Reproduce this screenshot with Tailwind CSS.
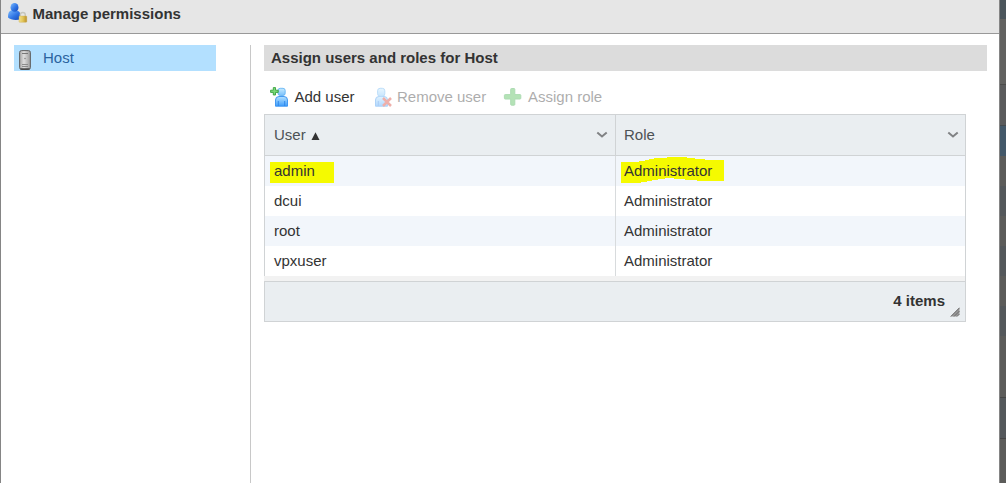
<!DOCTYPE html>
<html lang="en">
<head>
<meta charset="utf-8">
<title>Manage permissions</title>
<script src="https://cdn.jsdelivr.net/npm/@tailwindcss/browser@4"></script>
</head>
<body class="flex h-[483px] w-[1006px] overflow-hidden bg-white font-['Liberation_Sans',Arial,sans-serif] text-[15px] leading-[18px] text-[#333]">
<div class="flex h-full w-[1000px] flex-col border-x border-[#858585]">
  <header class="flex h-[34px] shrink-0 border-b border-[#999] bg-[#e6e6e6] pt-[3px] pl-[7px]">
    <svg class="h-5 w-5 shrink-0" viewBox="0 0 20 20">
      <defs>
        <linearGradient id="blue" x2="1" y2="1"><stop stop-color="#7dbcff"/><stop offset=".55" stop-color="#2f74e4"/><stop offset="1" stop-color="#1547b5"/></linearGradient>
        <linearGradient id="gold" x2="1"><stop stop-color="#f3e08c"/><stop offset=".5" stop-color="#e2c558"/><stop offset="1" stop-color="#b98f2a"/></linearGradient>
      </defs>
      <path d="M0 14.500C0 10 1 7.500 4 7.200L9 7.500c3 .8 4 3.500 4 8.500-4 1.500-10.500 1.200-13-1.500z" fill="url(#blue)"/>
      <ellipse cx="6.500" cy="4.400" rx="4" ry="4.400" fill="url(#blue)"/>
      <path d="M12.300 13.500v-1.500a2.500 2.500 0 0 1 5 0v1.500" fill="none" stroke="#c6c6bd" stroke-width="1.400"/>
      <rect x="11" y="13" width="7.800" height="6.300" rx=".8" fill="url(#gold)" stroke="#c9ac50" stroke-width=".4"/>
    </svg>
    <h1 class="ml-[4.500px] pt-[2px] font-bold">Manage permissions</h1>
  </header>
  <div class="flex flex-1 pt-[11px]">
    <nav class="w-[250px] shrink-0 border-r border-[#c8c8c8] pl-[13px]">
      <div class="flex h-[26px] w-[202px] bg-[#b3e0ff] pt-[5px] pl-[5px] text-[#2a639f]">
        <svg class="h-5 w-3 shrink-0" viewBox="0 0 12 20">
          <defs><linearGradient id="metal" x2="1"><stop stop-color="#a4a4a4"/><stop offset=".4" stop-color="#dedede"/><stop offset="1" stop-color="#9c9c9c"/></linearGradient></defs>
          <rect x=".6" y=".6" width="10.800" height="18.800" rx="1.800" fill="url(#metal)" stroke="#626262" stroke-width="1"/>
          <path d="M1.500 19h9" stroke="#333" stroke-width="1.200"/>
          <path d="M3 3.500h6" stroke="#777"/><path d="M3 14.500h6M3 16.500h6" stroke="#8b8b8b"/><circle cx="6" cy="8.500" r=".7" fill="#777"/>
        </svg>
        <span class="ml-[12px] -mt-px">Host</span>
      </div>
    </nav>
    <main class="ml-[13px] w-[723px]">
      <h2 class="h-[26px] bg-[#dcdcdc] pt-[4px] pl-[7px] font-bold">Assign users and roles for Host</h2>
      <div class="flex h-[43px] pt-[16px]">
        <button class="ml-[6px] flex w-[104px]">
          <svg class="h-5 w-[18px] shrink-0" viewBox="0 0 18 20">
            <defs>
              <linearGradient id="user" x2="0" y2="1"><stop stop-color="#b5e2ff"/><stop offset="1" stop-color="#3e9dfc"/></linearGradient>
              <linearGradient id="head" x2="0" y2="1"><stop stop-color="#c5eaff"/><stop offset="1" stop-color="#79c0fb"/></linearGradient>
            </defs>
            <path d="M5.500 19.200v-6.200q0-3.500 3.500-3.500h5q3.500 0 3.500 3.500v6.200z" fill="url(#user)" stroke="#3590ef" stroke-width=".9"/>
            <path d="M8.300 14v5M14.700 14v5" stroke="#2b84e8" stroke-width=".9"/>
            <rect x="8" y="1.300" width="7.200" height="7.200" rx="2.200" fill="url(#head)" stroke="#5baef3" stroke-width=".8"/>
            <path d="M3.300.600h2.200v2.600h2.700v2.200H5.500V8H3.300V5.400H.600V3.200h2.700z" fill="#7cd978" stroke="#37a23c" stroke-width=".9"/>
          </svg>
          <span class="ml-[6.500px] mt-px whitespace-nowrap text-[#333]">Add user</span>
        </button>
        <button class="flex w-[129px] opacity-40">
          <svg class="h-5 w-[18px] shrink-0" viewBox="0 0 18 20">
            <path d="M1.500 19.200v-6.200q0-3.500 3.500-3.500h5q3.500 0 3.500 3.500v6.200z" fill="url(#user)" stroke="#3590ef"/>
            <path d="M4.300 14v5" stroke="#2b84e8"/>
            <rect x="3.600" y="1.300" width="7.200" height="8" rx="2.500" fill="url(#head)" stroke="#5baef3"/>
            <path d="m9 11 8 8m0-8-8 8" stroke="#d5392c" stroke-width="2.500"/>
          </svg>
          <span class="ml-[5px] mt-px whitespace-nowrap">Remove user</span>
        </button>
        <button class="flex opacity-40">
          <svg class="h-5 w-[19px] shrink-0" viewBox="0 0 19 20">
            <path d="M8.500 1.500h2.500q.800 0 .8.800v5.300h5.200q.800 0 .8.800v2.800q0 .800-.8.800h-5.200v5.400q0 .800-.8.800H8.500q-.8 0-.8-.8V12H2.200q-.8 0-.8-.8V8.400q0-.8.8-.8h5.500V2.300q0-.8.8-.8z" fill="#45b94a" stroke="#35a843"/>
          </svg>
          <span class="ml-[6px] mt-px whitespace-nowrap">Assign role</span>
        </button>
      </div>
      <section class="w-[702px] border border-[#d0d3d5]">
        <div class="flex h-[41px] border-b border-[#d0d3d5] bg-[#eaeef1] pt-[11px] text-[#4d5256]">
          <div class="-mt-[11px] flex w-[351px] border-r border-[#d0d3d5] pt-[11px] pl-[9px]">User
            <svg class="ml-[5px] mt-[6px] h-[8px] w-[9px]" viewBox="0 0 9 8"><path d="m4.500 .3 4 7.700H.500z" fill="#333"/></svg>
            <svg class="mt-[5px] mr-[7px] ml-auto h-[7px] w-[12px]" viewBox="0 0 12 7"><path d="m1.300 1.500 4.700 4 4.700-4" fill="none" stroke="#808284" stroke-width="2"/></svg>
          </div>
          <div class="flex flex-1 pl-[8px]">Role
            <svg class="mt-[5px] mr-[6px] ml-auto h-[7px] w-[12px]" viewBox="0 0 12 7"><path d="m1.300 1.500 4.700 4 4.700-4" fill="none" stroke="#808284" stroke-width="2"/></svg>
          </div>
        </div>
        <div class="flex h-[30px] bg-[#f2f6fb]">
          <div class="w-[351px] border-r border-[#d8dbdd] pt-[6px] pl-[5px]"><span class="block h-[21px] w-[64px] bg-[#f5fa00] pl-[4px]">admin</span></div>
          <div class="relative flex-1 pt-[6px] pl-[8px]">
            <svg class="absolute top-0 left-[5px] h-[30px] w-[104px]" viewBox="0 0 104 30" shape-rendering="crispEdges"><path d="M0 6h18V5h6V4h4V3h5V2h13V1h20v1h8v1h10v1h19v21H76v-1H64v-1H53v-1h-9v1h-7v1h-6v1h-5v1h-6v1H0z" fill="#f5fa00"/></svg>
            <span class="relative">Administrator</span>
          </div>
        </div>
        <div class="flex h-[30px]"><div class="w-[351px] border-r border-[#d8dbdd] pt-[6px] pl-[9px]">dcui</div><div class="pt-[6px] pl-[8px]">Administrator</div></div>
        <div class="flex h-[30px] bg-[#f2f6fb]"><div class="w-[351px] border-r border-[#d8dbdd] pt-[6px] pl-[9px]">root</div><div class="pt-[6px] pl-[8px]">Administrator</div></div>
        <div class="flex h-[30px]"><div class="w-[351px] border-r border-[#d8dbdd] pt-[6px] pl-[9px]">vpxuser</div><div class="pt-[6px] pl-[8px]">Administrator</div></div>
        <div class="-ml-px h-[5px] bg-[#f2f2f2]"></div>
        <footer class="flex h-[40px] justify-end border-t border-[#d0d3d5] bg-[#eaeef1] pt-[10px] pr-[5px] font-bold">4 items
          <svg class="mt-[15px] ml-[5px] h-[10px] w-[10px]" viewBox="0 0 10 10"><path d="M.500 9.500 9.500.500v6.500l-2.500 2.500z" fill="#999"/><path d="M.800 9.500 9.500.800M4 9.500l5.500-5.500M7 9.500l2.500-2.500" stroke="#6a6a6a"/></svg>
        </footer>
      </section>
    </main>
  </div>
</div>
<aside class="flex flex-1 flex-col bg-[#5c5c5a]">
  <div class="h-[19px] bg-[#4b555b]"></div>
  <div class="h-[66px] border-b border-[#4c4c4b] bg-[#626260]"></div>
  <div class="h-[41px] border-b border-[#454b4e] bg-[#5a5b5c]"></div>
  <div class="h-[30px] bg-[#435869]"></div>
  <div class="h-[30px] bg-[#5c5c5a]"></div>
  <div class="h-[30px] bg-[#54585b]"></div>
  <div class="h-[30px] bg-[#5c5c5a]"></div>
  <div class="h-[30px] bg-[#54585b]"></div>
  <div class="h-[30px] bg-[#5c5c5a]"></div>
  <div class="h-[30px] bg-[#54585b]"></div>
  <div class="h-[30px] bg-[#5c5c5a]"></div>
  <div class="h-[32px] border-b border-[#464646] bg-[#5c5c5a]"></div>
  <div class="h-[41px] border-b border-[#464646] bg-[#54585b]"></div>
  <div class="flex-1 bg-[#5c5c5a]"></div>
</aside>
</body>
</html>
